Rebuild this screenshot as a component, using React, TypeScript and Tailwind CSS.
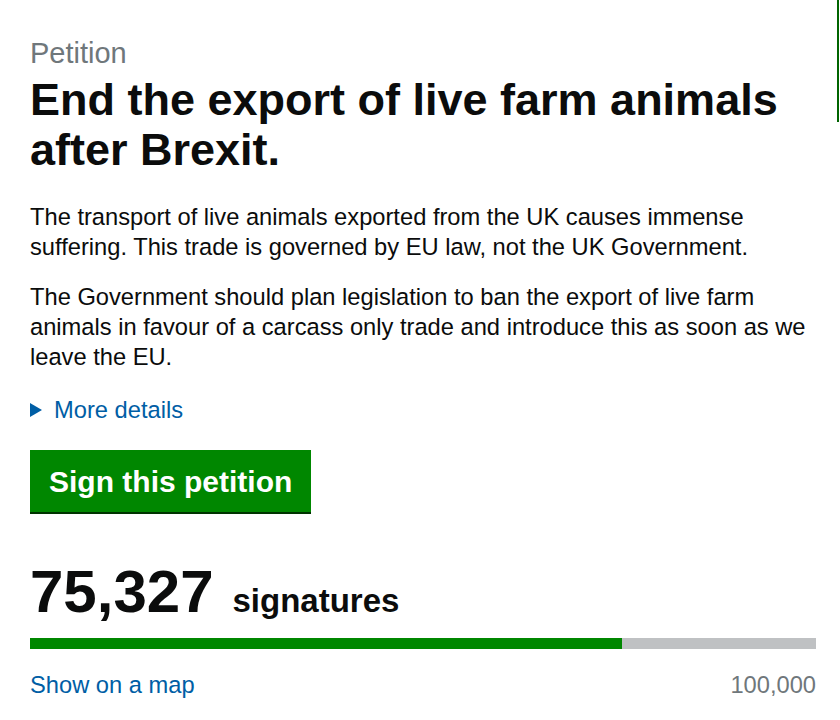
import React from 'react';

const signatures = 75327;
const target = 100000;

export default function App() {
  const pct = (signatures / target) * 100;

  return (
    <div className="relative w-[840px] h-[720px] bg-white overflow-hidden font-['Liberation_Sans',Arial,sans-serif] text-[#0b0c0c]">
      <div className="absolute right-[1px] top-0 w-[2px] h-[122px] bg-[#006400]" />

      <div className="pl-[30px] pr-[24px] pt-[36px]">
        <p className="text-[29px] leading-[34px] text-[#6f777b]">Petition</p>
        <h1 className="mt-[5px] text-[45px] leading-[50px] font-bold">
          End the export of live farm animals after Brexit.
        </h1>

        <div className="mt-[27px] text-[23.7px] leading-[30px] space-y-[20px]">
          <p>
            The transport of live animals exported from the UK causes immense suffering. This trade is governed by EU
            law, not the UK Government.
          </p>
          <p>
            The Government should plan legislation to ban the export of live farm animals in favour of a carcass only
            trade and introduce this as soon as we leave the EU.
          </p>
        </div>

        <div className="mt-[23px] flex items-center gap-[12px] text-[23.7px] leading-[30px] text-[#005ea5]">
          <svg width="12" height="14" viewBox="0 0 12 14" className="fill-[#005ea5]">
            <polygon points="0,0 12,7 0,14" />
          </svg>
          <span>More details</span>
        </div>

        <button className="mt-[25px] h-[62px] px-[19px] bg-[#008700] text-white text-[30px] font-bold shadow-[0_2px_0_#003300]">
          Sign this petition
        </button>

        <div className="mt-[50px] flex items-baseline gap-[19px]">
          <span className="text-[60px] leading-[60px] font-bold">75,327</span>
          <span className="text-[33px] font-bold">signatures</span>
        </div>

        <div className="mt-[12px] h-[11px] bg-[#bfc1c3]">
          <div className="h-full bg-[#008700]" style={{ width: `${pct}%` }} />
        </div>

        <div className="mt-[21px] flex justify-between text-[23.7px] leading-[30px]">
          <span className="text-[#005ea5]">Show on a map</span>
          <span className="text-[#6f777b]">100,000</span>
        </div>
      </div>
    </div>
  );
}
